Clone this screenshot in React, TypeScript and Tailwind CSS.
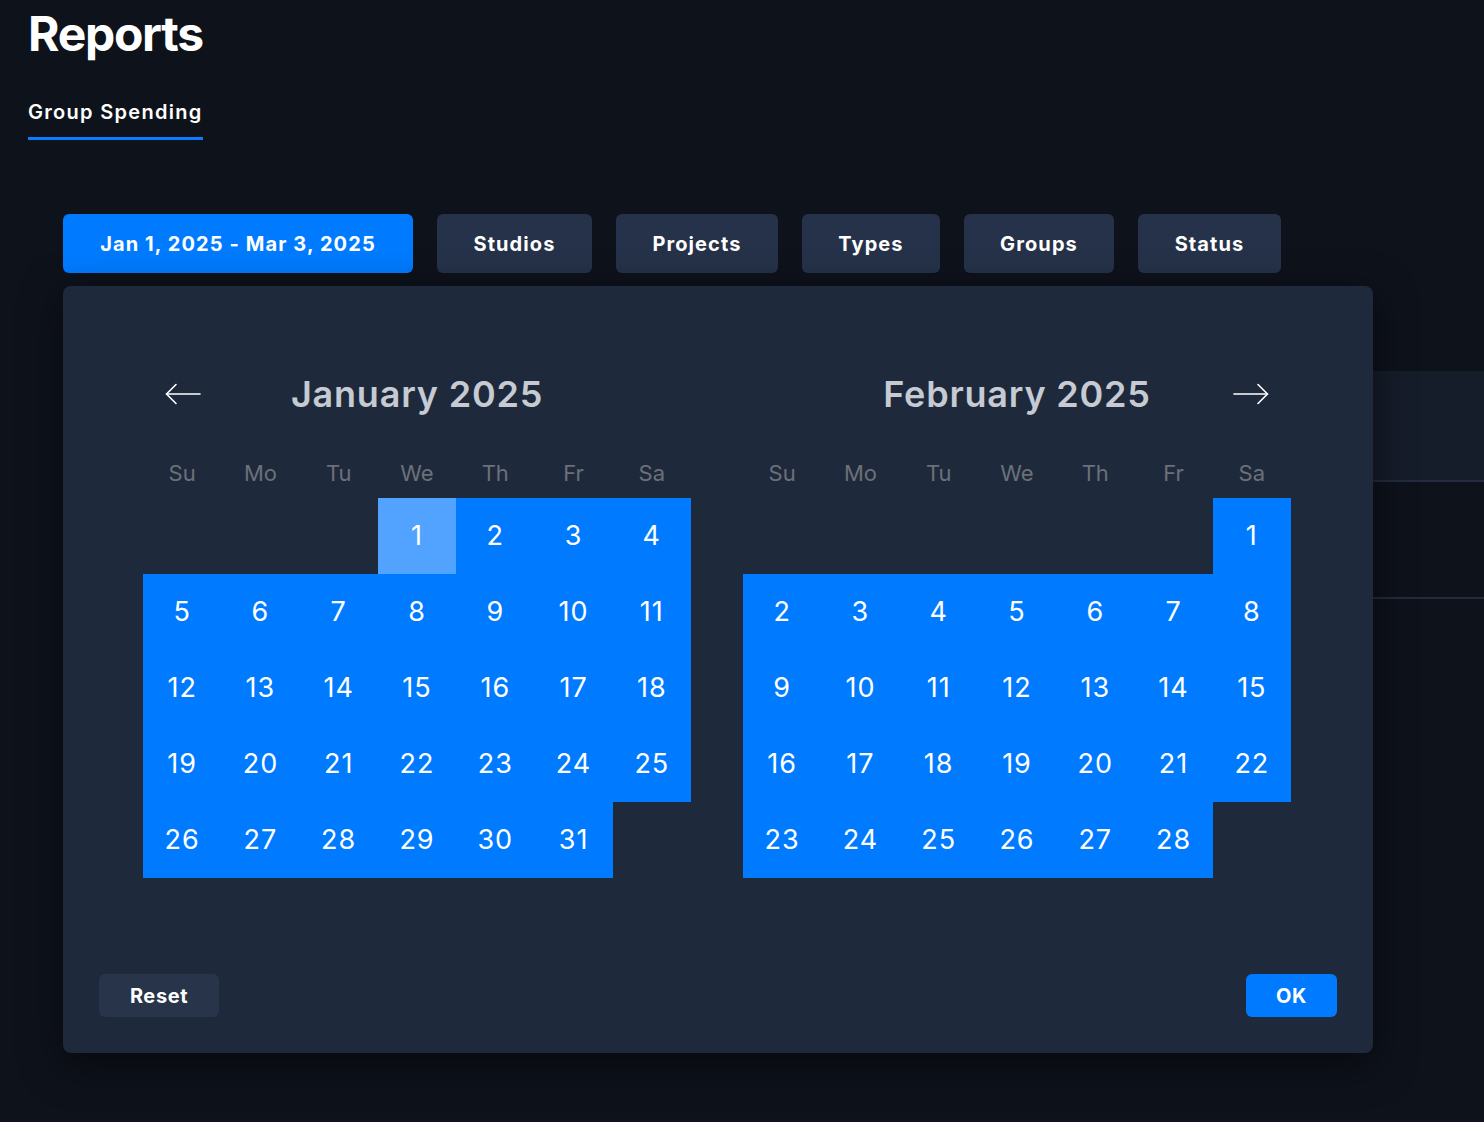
const months = [
  { name: "January 2025", offset: 3, days: 31, start: 1 },
  { name: "February 2025", offset: 6, days: 28, start: 0 },
];

const weekdays = ["Su", "Mo", "Tu", "We", "Th", "Fr", "Sa"];

const filters = [
  { label: "Studios", w: "w-[155px]" },
  { label: "Projects", w: "w-[162px]" },
  { label: "Types", w: "w-[138px]" },
  { label: "Groups", w: "w-[150px]" },
  { label: "Status", w: "w-[143px]" },
];

const ArrowLeft = () => (
  <svg width="36" height="22" viewBox="0 0 36 22" fill="none" stroke="#ffffff" strokeWidth="1.6" strokeLinecap="round" strokeLinejoin="round">
    <path d="M35 11H1.5" />
    <path d="M11 1.5L1.5 11L11 20.5" />
  </svg>
);

const ArrowRight = () => (
  <svg width="36" height="22" viewBox="0 0 36 22" fill="none" stroke="#ffffff" strokeWidth="1.6" strokeLinecap="round" strokeLinejoin="round">
    <path d="M1 11H34.5" />
    <path d="M25 1.5L34.5 11L25 20.5" />
  </svg>
);

const Month = ({ month, side }: { month: (typeof months)[number]; side: "left" | "right" }) => {
  const cells: (number | null)[] = [];
  for (let i = 0; i < month.offset; i++) cells.push(null);
  for (let d = 1; d <= month.days; d++) cells.push(d);

  return (
    <div className="w-[548px] flex flex-col">
      {/* header */}
      <div className="grid grid-cols-[1fr_auto_1fr] items-center h-14">
        <div className="flex justify-start pl-[22px]">{side === "left" && <ArrowLeft />}</div>
        <div className="text-[36px] font-semibold tracking-[0.8px] text-[#c6cad2] leading-none">{month.name}</div>
        <div className="flex justify-end pr-[22px]">{side === "right" && <ArrowRight />}</div>
      </div>

      <div className="grid grid-cols-7 mt-[26px] h-[50px] items-center">
        {weekdays.map((w) => (
          <div key={w} className="text-center text-[22px] text-[#6b7079]">
            {w}
          </div>
        ))}
      </div>

      <div className="grid grid-cols-7 auto-rows-[76px]">
        {cells.map((d, i) =>
          d === null ? (
            <div key={i} />
          ) : (
            <div
              key={i}
              className={`flex items-center justify-center text-[27px] tracking-[1px] text-white ${
                d === month.start ? "bg-[#52a3ff]" : "bg-[#007bff]"
              }`}
            >
              {d}
            </div>
          )
        )}
      </div>
    </div>
  );
};

const App = () => {
  return (
    <div className="min-h-screen w-full overflow-hidden bg-[#0e121b] pl-7 font-['Inter',sans-serif] text-white">
      {/* title */}
      <h1 className="mt-[10px] text-[48px] font-bold leading-none tracking-[-1.3px]">Reports</h1>

      {/* tabs */}
      <div className="mt-[40px] flex">
        <div className="border-b-[3px] border-[#0a7cff] pb-[11px] text-[20px] font-semibold leading-[28px] tracking-[1.3px]">
          Group Spending
        </div>
      </div>

      {/* filters */}
      <div className="relative ml-[35px] mt-[74px]">
        <div className="flex gap-6">
          <button className="h-[59px] w-[350px] rounded-md bg-[#007bff] text-[20px] font-bold tracking-[1.1px] text-white">
            Jan 1, 2025 - Mar 3, 2025
          </button>
          {filters.map((f) => (
            <button key={f.label} className={`h-[59px] ${f.w} rounded-md bg-[#263249] text-[20px] font-bold tracking-[1.1px] text-white`}>
              {f.label}
            </button>
          ))}
        </div>

        {/* date picker popover */}
        <div className="absolute left-0 top-[72px] z-10 w-[1310px] rounded-lg bg-[#1e2a3c] shadow-[0_10px_40px_rgba(0,0,0,0.55)]">
          <div className="flex gap-[52px] pl-20 pr-[82px] pt-20">
            <Month month={months[0]} side="left" />
            <Month month={months[1]} side="right" />
          </div>
          <div className="mt-24 flex items-center justify-between px-9 pb-[36px]">
            <button className="h-[43px] w-[120px] rounded-md bg-[#27344a] text-[20px] font-bold tracking-[0.6px] text-white">Reset</button>
            <button className="h-[43px] w-[91px] rounded-md bg-[#007bff] text-[20px] font-bold tracking-[0.6px] text-white">OK</button>
          </div>
        </div>

        {/* table behind */}
        <div className="mt-[98px] w-[1500px]">
          <div className="h-[111px] border-b-2 border-[#222c3c] bg-[#161d2a]" />
          <div className="h-[117px] border-b-2 border-[#222c3c]" />
        </div>
      </div>
    </div>
  );
};

export default App;
